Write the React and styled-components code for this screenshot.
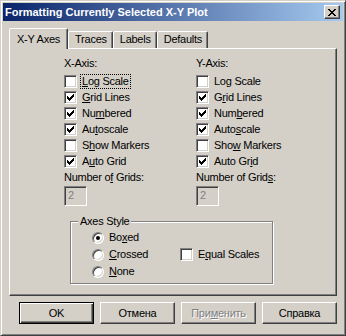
import styled, { createGlobalStyle } from 'styled-components';

const GlobalStyle = createGlobalStyle`
  html, body {
    margin: 0;
    padding: 0;
    background: #d4d0c8;
  }
  body {
    font-family: "Liberation Sans", Arial, sans-serif;
    font-size: 11px;
    letter-spacing: -0.25px;
    color: #000;
  }
`;

const axisOptions = [
  { label: 'Log Scale', key: 0 },
  { label: 'Grid Lines', key: 1 },
  { label: 'Numbered', key: 2 },
  { label: 'Autoscale', key: 3 },
  { label: 'Show Markers', key: 4 },
  { label: 'Auto Grid', key: 5 },
];

const checkedFlags = [false, true, true, true, false, true];

// mnemonic letter index per option, per axis
const xMnemonics = [0, 0, 2, 2, 1, 1];
const yMnemonics = [2, 1, 3, 4, 3, 7];

function Mnemonic({ text, index }) {
  if (index == null || index < 0) return text;
  return (
    <>
      {text.slice(0, index)}
      <U>{text[index]}</U>
      {text.slice(index + 1)}
    </>
  );
}

function CheckMark() {
  return (
    <svg width="7" height="7" viewBox="0 0 7 7" shapeRendering="crispEdges">
      <path
        fill="#000"
        d="M0 2h1v3H0z M1 3h1v3H1z M2 4h1v3H2z M3 3h1v3H3z M4 2h1v3H4z M5 1h1v3H5z M6 0h1v3H6z"
      />
    </svg>
  );
}

function CloseGlyph() {
  return (
    <svg width="8" height="7" viewBox="0 0 8 7" shapeRendering="crispEdges">
      <path
        fill="#000"
        d="M0 0h2v1H0z M6 0h2v1H6z M1 1h2v1H1z M5 1h2v1H5z M2 2h4v1H2z M3 3h2v1H3z M2 4h4v1H2z M1 5h2v1H1z M5 5h2v1H5z M0 6h2v1H0z M6 6h2v1H6z"
      />
    </svg>
  );
}

function CheckBox({ checked, children, focused }) {
  return (
    <S.CheckRow>
      <S.Box>{checked && <CheckMark />}</S.Box>
      <S.CheckText $focused={focused}>{children}</S.CheckText>
    </S.CheckRow>
  );
}

function Radio({ checked, children }) {
  return (
    <S.CheckRow>
      <S.RadioCircle>{checked && <S.RadioDot />}</S.RadioCircle>
      <S.CheckText>{children}</S.CheckText>
    </S.CheckRow>
  );
}

function AxisColumn({ title, mnemonics, gridsMnemonic, focusFirst }) {
  return (
    <S.Column>
      <S.Heading>{title}</S.Heading>
      {axisOptions.map((opt, i) => (
        <CheckBox key={opt.key} checked={checkedFlags[i]} focused={focusFirst && i === 0}>
          <Mnemonic text={opt.label} index={mnemonics[i]} />
        </CheckBox>
      ))}
      <S.GridsLabel>
        <Mnemonic text="Number of Grids:" index={gridsMnemonic} />
      </S.GridsLabel>
      <S.Field>2</S.Field>
    </S.Column>
  );
}

export default function App() {
  return (
    <>
      <GlobalStyle />
      <S.Window>
        <S.TitleBar>
          <S.Title>Formatting Currently Selected X-Y Plot</S.Title>
          <S.CloseButton>
            <CloseGlyph />
          </S.CloseButton>
        </S.TitleBar>

        <S.Body>
          <S.TabStrip>
            <S.Tab $active>X-Y Axes</S.Tab>
            <S.Tab>Traces</S.Tab>
            <S.Tab>Labels</S.Tab>
            <S.Tab>Defaults</S.Tab>
          </S.TabStrip>

          <S.Panel>
            <S.Columns>
              <AxisColumn title="X-Axis:" mnemonics={xMnemonics} gridsMnemonic={8} focusFirst />
              <AxisColumn title="Y-Axis:" mnemonics={yMnemonics} gridsMnemonic={14} />
            </S.Columns>

            <S.GroupBox>
              <S.Legend>Axes Style</S.Legend>
              <S.GroupGrid>
                <Radio checked>
                  <Mnemonic text="Boxed" index={2} />
                </Radio>
                <div />
                <Radio>
                  <Mnemonic text="Crossed" index={0} />
                </Radio>
                <CheckBox>
                  <Mnemonic text="Equal Scales" index={1} />
                </CheckBox>
                <Radio>
                  <Mnemonic text="None" index={0} />
                </Radio>
              </S.GroupGrid>
            </S.GroupBox>
          </S.Panel>

          <S.ButtonRow>
            <S.Button $default>OK</S.Button>
            <S.Button>Отмена</S.Button>
            <S.Button disabled>
              <Mnemonic text="Применить" index={3} />
            </S.Button>
            <S.Button>Справка</S.Button>
          </S.ButtonRow>
        </S.Body>
      </S.Window>
    </>
  );
}

const Window = styled.div`
  box-sizing: border-box;
  width: 346px;
  height: 336px;
  padding: 2px;
  display: flex;
  flex-direction: column;
  background: #d4d0c8;
  border: 1px solid;
  border-color: #d4d0c8 #404040 #404040 #d4d0c8;
  box-shadow: inset 1px 1px #fff, inset -1px -1px #808080;
`;

const TitleBar = styled.div`
  height: 18px;
  padding: 0 3px 0 2px;
  display: flex;
  align-items: center;
  justify-content: space-between;
  background: linear-gradient(to right, #0a246a, #a6caf0);
`;

const Title = styled.div`
  color: #fff;
  font-weight: bold;
  font-size: 11px;
  letter-spacing: 0;
  white-space: nowrap;
`;

const CloseButton = styled.div`
  box-sizing: border-box;
  width: 16px;
  height: 14px;
  display: flex;
  align-items: center;
  justify-content: center;
  background: #d4d0c8;
  border: 1px solid;
  border-color: #fff #404040 #404040 #fff;
  box-shadow: inset -1px -1px #808080;
`;

const Body = styled.div`
  padding: 7px 6px 0 6px;
  display: flex;
  flex-direction: column;
`;

const TabStrip = styled.div`
  height: 21px;
  display: flex;
  align-items: flex-end;
`;

const Tab = styled.div`
  box-sizing: border-box;
  position: relative;
  z-index: ${(p) => (p.$active ? 1 : 0)};
  height: ${(p) => (p.$active ? '21px' : '17px')};
  margin-bottom: ${(p) => (p.$active ? '0' : '1px')};
  padding: ${(p) => (p.$active ? '4px 7px 0 7px' : '1px 5px 0 6px')};
  background: #d4d0c8;
  border: 1px solid;
  border-bottom: none;
  border-color: #fff #404040 transparent #fff;
  border-radius: 2px 2px 0 0;
  box-shadow: inset -1px 0 #808080;
  line-height: 13px;
  white-space: nowrap;
`;

const Panel = styled.div`
  box-sizing: border-box;
  height: 248px;
  margin-top: -1px;
  padding: 8px 0 0 54px;
  display: flex;
  flex-direction: column;
  border: 1px solid;
  border-color: #fff #404040 #404040 #fff;
  box-shadow: inset -1px -1px #808080;
`;

const Columns = styled.div`
  display: grid;
  grid-template-columns: 132px auto;
`;

const Column = styled.div`
  display: flex;
  flex-direction: column;
  align-items: flex-start;
`;

const Heading = styled.div`
  height: 13px;
  line-height: 13px;
  margin-bottom: 3px;
`;

const CheckRow = styled.div`
  height: 16px;
  display: flex;
  align-items: center;
  gap: 4px;
`;

const Box = styled.div`
  box-sizing: border-box;
  width: 13px;
  height: 13px;
  display: flex;
  align-items: center;
  justify-content: center;
  background: #fff;
  border: 1px solid;
  border-color: #808080 #fff #fff #808080;
  box-shadow: inset 1px 1px #404040, inset -1px -1px #d4d0c8;
`;

const CheckText = styled.span`
  padding: 0 1px;
  line-height: 13px;
  outline: ${(p) => (p.$focused ? '1px dotted #000' : 'none')};
  white-space: nowrap;
`;

const RadioCircle = styled.div`
  box-sizing: border-box;
  width: 12px;
  height: 12px;
  display: flex;
  align-items: center;
  justify-content: center;
  background: #fff;
  border-radius: 50%;
  border: 1px solid;
  border-color: #808080 #fff #fff #808080;
  box-shadow: inset 1px 1px #404040, inset -1px -1px #d4d0c8;
`;

const RadioDot = styled.div`
  width: 4px;
  height: 4px;
  border-radius: 50%;
  background: #000;
`;

const GridsLabel = styled.div`
  height: 16px;
  line-height: 16px;
`;

const Field = styled.div`
  box-sizing: border-box;
  width: 23px;
  height: 20px;
  margin-top: 1px;
  padding: 2px 0 0 3px;
  color: #808080;
  background: #d4d0c8;
  border: 1px solid;
  border-color: #808080 #fff #fff #808080;
  box-shadow: inset 1px 1px #404040, inset -1px -1px #d4d0c8;
  line-height: 13px;
`;

const GroupBox = styled.div`
  position: relative;
  box-sizing: border-box;
  width: 203px;
  height: 63px;
  margin: 15px 0 0 6px;
  padding: 7px 0 0 21px;
  border: 1px solid #808080;
  box-shadow: 1px 1px 0 #fff, inset 1px 1px 0 #fff;
`;

const Legend = styled.span`
  position: absolute;
  top: -7px;
  left: 7px;
  padding: 0 2px;
  background: #d4d0c8;
  line-height: 13px;
`;

const GroupGrid = styled.div`
  display: grid;
  grid-template-columns: 88px auto;
  grid-auto-rows: 17px;
  align-items: center;
`;

const ButtonRow = styled.div`
  margin-top: 6px;
  display: flex;
  justify-content: flex-end;
  gap: 6px;
`;

const Button = styled.button`
  box-sizing: border-box;
  width: 75px;
  height: 22px;
  padding: 0;
  font: inherit;
  letter-spacing: -0.25px;
  color: ${(p) => (p.disabled ? '#808080' : '#000')};
  text-shadow: ${(p) => (p.disabled ? '1px 1px 0 #fff' : 'none')};
  background: #d4d0c8;
  border: 1px solid;
  border-color: ${(p) => (p.$default ? '#000' : '#fff #404040 #404040 #fff')};
  box-shadow: ${(p) =>
    p.$default
      ? 'inset 1px 1px #fff, inset -1px -1px #404040, inset -2px -2px #808080'
      : 'inset -1px -1px #808080'};
`;

const U = styled.span`
  text-decoration: underline;
  text-underline-offset: 1px;
`;

const S = {
  Window,
  TitleBar,
  Title,
  CloseButton,
  Body,
  TabStrip,
  Tab,
  Panel,
  Columns,
  Column,
  Heading,
  CheckRow,
  Box,
  CheckText,
  RadioCircle,
  RadioDot,
  GridsLabel,
  Field,
  GroupBox,
  Legend,
  GroupGrid,
  ButtonRow,
  Button,
  U,
};
